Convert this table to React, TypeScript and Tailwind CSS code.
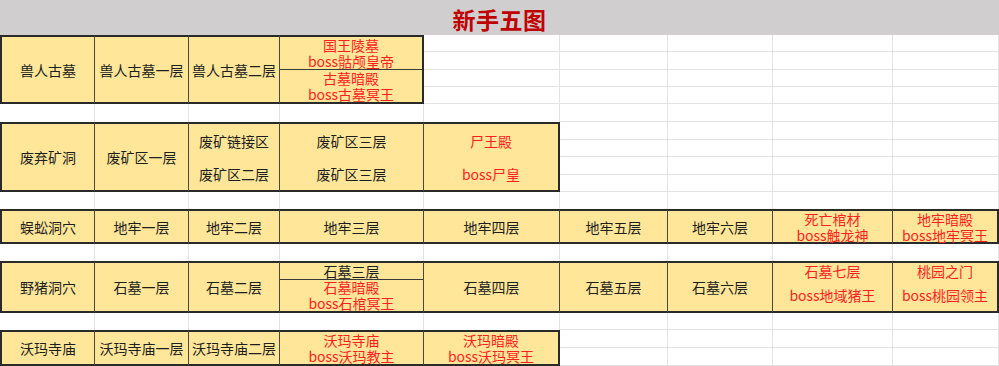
import React from "react";

type Line = { t: string; red?: boolean };
type Part = { rows: 1 | 2; lines: Line[]; divider?: boolean };
type Cell = Part[];
type Block = { h: string; rows: number; cells: Cell[] };

const COLS =
  "grid grid-cols-[95px_94px_91px_144px_136px_108px_105px_120px_106px] grid-rows-[minmax(0,1fr)]";

const GROW: Record<number, string> = {
  1: "grow basis-0",
  2: "grow-[2] basis-0",
};

// helpers: plain black cell, black line, red line
const k = (t: string): Line => ({ t });
const r = (t: string): Line => ({ t, red: true });
const plain = (t: string): Cell => [{ rows: 2, lines: [k(t)] }];

const BLOCKS: Block[] = [
  {
    h: "h-[69px]",
    rows: 4,
    cells: [
      plain("兽人古墓"),
      plain("兽人古墓一层"),
      plain("兽人古墓二层"),
      [
        { rows: 2, lines: [r("国王陵墓"), r("boss骷颅皇帝")] },
        { rows: 2, divider: true, lines: [r("古墓暗殿"), r("boss古墓冥王")] },
      ],
    ],
  },
  {
    h: "h-[70px]",
    rows: 4,
    cells: [
      plain("废弃矿洞"),
      plain("废矿区一层"),
      [
        { rows: 2, lines: [k("废矿链接区")] },
        { rows: 2, lines: [k("废矿区二层")] },
      ],
      [
        { rows: 2, lines: [k("废矿区三层")] },
        { rows: 2, lines: [k("废矿区三层")] },
      ],
      [
        { rows: 2, lines: [r("尸王殿")] },
        { rows: 2, lines: [r("boss尸皇")] },
      ],
    ],
  },
  {
    h: "h-[35px]",
    rows: 2,
    cells: [
      plain("蜈蚣洞穴"),
      plain("地牢一层"),
      plain("地牢二层"),
      plain("地牢三层"),
      plain("地牢四层"),
      plain("地牢五层"),
      plain("地牢六层"),
      [{ rows: 2, lines: [r("死亡棺材"), r("boss触龙神")] }],
      [{ rows: 2, lines: [r("地牢暗殿"), r("boss地牢冥王")] }],
    ],
  },
  {
    h: "h-[52px]",
    rows: 3,
    cells: [
      plain("野猪洞穴"),
      plain("石墓一层"),
      plain("石墓二层"),
      [
        { rows: 1, lines: [k("石墓三层")] },
        { rows: 2, divider: true, lines: [r("石墓暗殿"), r("boss石棺冥王")] },
      ],
      plain("石墓四层"),
      plain("石墓五层"),
      plain("石墓六层"),
      [
        { rows: 1, lines: [r("石墓七层")] },
        { rows: 2, lines: [r("boss地域猪王")] },
      ],
      [
        { rows: 1, lines: [r("桃园之门")] },
        { rows: 2, lines: [r("boss桃园领主")] },
      ],
    ],
  },
  {
    h: "h-[36px]",
    rows: 2,
    cells: [
      plain("沃玛寺庙"),
      plain("沃玛寺庙一层"),
      plain("沃玛寺庙二层"),
      [{ rows: 2, lines: [r("沃玛寺庙"), r("boss沃玛教主")] }],
      [{ rows: 2, lines: [r("沃玛暗殿"), r("boss沃玛冥王")] }],
    ],
  },
];

const GAPS = ["h-[18px]", "h-[17px]", "h-[17px]", "h-[17px]"];

function DataCell({ cell, first, last }: { cell: Cell; first: boolean; last: boolean }) {
  return (
    <div
      className={`flex flex-col min-h-0 bg-[#ffe699] border-t-2 border-b-2 border-[#2a2a2a] ${
        first ? "border-l-2" : ""
      } ${last ? "border-r-2" : "border-r border-r-[#4e4936]"}`}
    >
      {cell.map((p, i) => (
        <div
          key={i}
          className={`${GROW[p.rows]} min-h-0 flex flex-col items-center justify-center ${
            p.divider ? "border-t border-[#3a3a3a]" : ""
          }`}
        >
          {p.lines.map((l, j) => (
            <span
              key={j}
              className={`block shrink-0 whitespace-nowrap text-[14px] leading-[16px] ${
                l.red ? "text-[#ff1f1f]" : "text-[#1e1e1e]"
              }`}
            >
              {l.t}
            </span>
          ))}
        </div>
      ))}
    </div>
  );
}

function EmptyCell({ rows }: { rows: number }) {
  return (
    <div className="flex flex-col min-h-0 border-r border-[#e3e3e3] bg-white">
      {Array.from({ length: rows }).map((_, i) => (
        <div key={i} className="flex-1 border-b border-[#e3e3e3]" />
      ))}
    </div>
  );
}

function GapRow({ h, below }: { h: string; below: number }) {
  return (
    <div className={`${COLS} ${h}`}>
      {Array.from({ length: 9 }).map((_, i) => (
        <div
          key={i}
          className={`bg-white border-r border-[#e3e3e3] ${i < below ? "" : "border-b"}`}
        />
      ))}
    </div>
  );
}

export default function App() {
  return (
    <div className="w-[999px] h-[366px] overflow-hidden bg-white font-['Noto_Sans_CJK_SC',sans-serif]">
      <div className="h-[35px] bg-[#d0cece] flex items-center justify-center pt-[4px]">
        <h1 className="text-[23px] font-bold leading-none text-[#c00000] tracking-[0.5px]">新手五图</h1>
      </div>

      {BLOCKS.map((b, bi) => (
        <React.Fragment key={bi}>
          <div className={`${COLS} ${b.h}`}>
            {Array.from({ length: 9 }).map((_, ci) =>
              ci < b.cells.length ? (
                <DataCell
                  key={ci}
                  cell={b.cells[ci]}
                  first={ci === 0}
                  last={ci === b.cells.length - 1}
                />
              ) : (
                <EmptyCell key={ci} rows={b.rows} />
              )
            )}
          </div>
          {bi < BLOCKS.length - 1 && (
            <GapRow h={GAPS[bi]} below={BLOCKS[bi + 1].cells.length} />
          )}
        </React.Fragment>
      ))}
    </div>
  );
}
